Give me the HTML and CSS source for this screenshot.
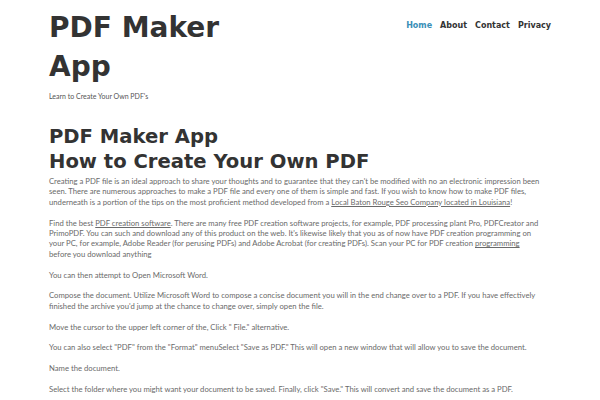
FILE: index.html
```html
<!DOCTYPE html>
<html>
<head>
<meta charset="utf-8">
<link rel="stylesheet" href="styles.css">
</head>
<body>
<div class="wrap">
  <header class="header">
    <div class="brand">
      <h1 class="site-title">PDF Maker App</h1>
      <p class="tagline">Learn to Create Your Own PDF's</p>
    </div>
    <nav class="nav">
      <a class="nav-link active">Home</a>
      <a class="nav-link">About</a>
      <a class="nav-link">Contact</a>
      <a class="nav-link">Privacy</a>
    </nav>
  </header>
  <main class="content">
    <h2 class="post-title">PDF Maker App<br>How to Create Your Own PDF</h2>
    <p>Creating a PDF file is an ideal approach to share your thoughts and to guarantee that they can't be modified with no an electronic impression been seen. There are numerous approaches to make a PDF file and every one of them is simple and fast. If you wish to know how to make PDF files, underneath is a portion of the tips on the most proficient method developed from a <a class="link">Local Baton Rouge Seo Company located in Louisiana</a>!</p>
    <p>Find the best <a class="link">PDF creation software</a>. There are many free PDF creation software projects, for example, PDF processing plant Pro, PDFCreator and PrimoPDF. You can such and download any of this product on the web. It's likewise likely that you as of now have PDF creation programming on your PC, for example, Adobe Reader (for perusing PDFs) and Adobe Acrobat (for creating PDFs). Scan your PC for PDF creation <a class="link">programming</a> before you download anything</p>
    <p>You can then attempt to Open Microsoft Word.</p>
    <p>Compose the document. Utilize Microsoft Word to compose a concise document you will in the end change over to a PDF. If you have effectively finished the archive you'd jump at the chance to change over, simply open the file.</p>
    <p>Move the cursor to the upper left corner of the, Click " File." alternative.</p>
    <p>You can also select "PDF" from the "Format" menuSelect "Save as PDF." This will open a new window that will allow you to save the document.</p>
    <p>Name the document.</p>
    <p>Select the folder where you might want your document to be saved. Finally, click "Save." This will convert and save the document as a PDF.</p>
  </main>
</div>
</body>
</html>
```
FILE: styles.css
```css
html, body {
  margin: 0;
  padding: 0;
  background: #fff;
}
body {
  font-family: "Lato", "Liberation Sans", sans-serif;
  font-weight: 400;
  color: #6a6a6a;
}
.wrap {
  width: 502px;
  margin: 0 auto;
}
.header {
  display: flex;
  justify-content: space-between;
  align-items: flex-start;
  padding-top: 8px;
}
.brand {
  width: 200px;
}
.site-title {
  margin: 0;
  font-family: "DejaVu Sans", sans-serif;
  font-weight: bold;
  font-size: 28px;
  line-height: 39px;
  color: #333;
}
.tagline {
  margin: 5px 0 0;
  font-size: 7px;
  line-height: 10px;
  color: #555;
}
.nav {
  display: flex;
  gap: 8px;
  padding-top: 11px;
}
.nav-link {
  font-family: "DejaVu Sans", sans-serif;
  font-weight: bold;
  font-size: 8px;
  line-height: 14px;
  color: #333;
}
.nav-link.active {
  color: #3a8fb7;
}
.content {
  padding-top: 23px;
  max-width: 494px;
}
.post-title {
  margin: 0 0 2px;
  font-family: "DejaVu Sans", sans-serif;
  font-weight: bold;
  font-size: 19.6px;
  line-height: 25px;
  color: #333;
}
.content p {
  margin: 0 0 10.4px;
  font-size: 7.7px;
  line-height: 10.4px;
}
.link {
  text-decoration: underline;
  color: inherit;
}
```
